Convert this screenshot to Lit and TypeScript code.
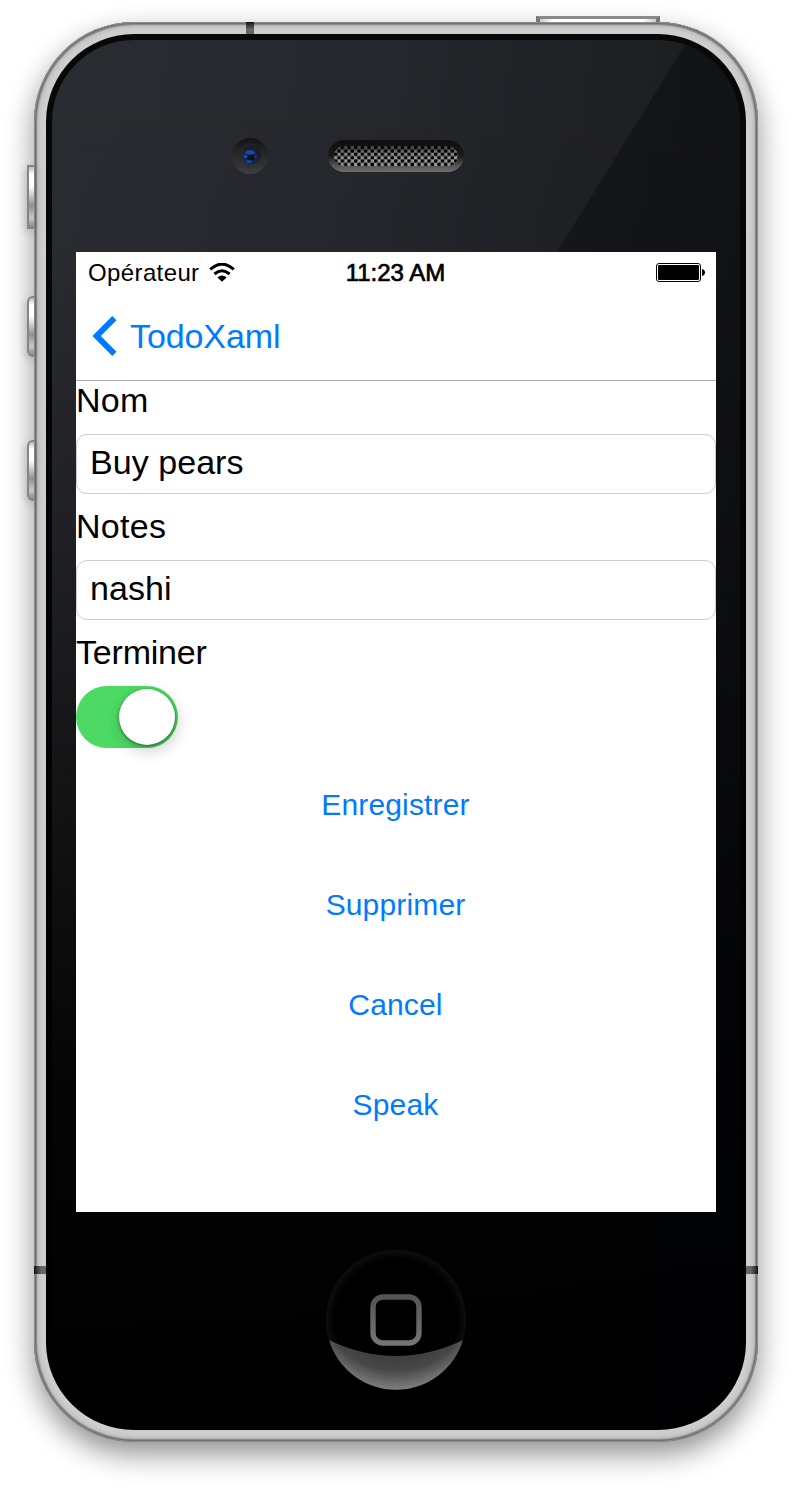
import { LitElement, html, css } from "lit";
import { customElement, property } from "lit/decorators.js";

@customElement("todo-screen")
class TodoScreen extends LitElement {
  @property() name = "Buy pears";
  @property() notes = "nashi";

  static styles = css`
    :host { display: block; width: 640px; height: 960px; background: #fff; color: #000; overflow: hidden;
      font-family: "Liberation Sans", Helvetica, sans-serif; font-size: 34px; line-height: 40px; }
    .status { height: 40px; display: grid; grid-template-columns: 1fr auto 1fr; align-items: center;
      padding: 2px 11px 0 12px; box-sizing: border-box; font-size: 24px; line-height: 38px; }
    .carrier { display: flex; align-items: center; gap: 10px; letter-spacing: 0.38px; }
    .clock { -webkit-text-stroke: 0.7px #000; margin-left: -2px; }
    .battery { justify-self: end; display: block; }
    .wifi { display: block; margin-top: -2px; }
    .nav { height: 88px; display: flex; align-items: center; gap: 13px; padding-left: 16px; box-sizing: border-box;
      color: #007aff; box-shadow: 0 1px #b2b2b2; position: relative; letter-spacing: -0.1px; }
    .form { display: grid; }
    .label { height: 40px; letter-spacing: 0.3px; }
    .label.tight { letter-spacing: -0.2px; }
    .field { box-sizing: border-box; height: 60px; margin: 14px 0 12px; border: 1px solid #ccc; border-radius: 11px;
      padding: 7px 13px; letter-spacing: 0.05px; }
    .switch { width: 102px; height: 62px; margin: 14px 0 12px; border-radius: 31px; background: #4cd964;
      display: flex; justify-content: flex-end; align-items: center; padding-right: 3px; box-sizing: border-box; }
    .knob { width: 56px; height: 56px; border-radius: 50%; background: #fff;
      box-shadow: 0 1px 3px rgba(0,0,0,.5), 2px 6px 16px rgba(0,0,0,.2); }
    .actions { display: grid; gap: 12px; }
    .action { height: 88px; display: flex; align-items: center; justify-content: center; color: #007aff; font-size: 30px;
      border: 0; padding: 2px 1px 0 0; background: none; font-family: inherit; letter-spacing: 0.15px; }
  `;

  render() {
    return html`
      <div class="status">
        <div class="carrier"><span>Opérateur</span>
          <svg class="wifi" width="26" height="19" viewBox="0 0 26 19">
            <path d="M1.2 6.4Q13-4.2 24.8 6.4" fill="none" stroke="#000" stroke-width="3"/>
            <path d="M5.4 11Q13 4.4 20.6 11" fill="none" stroke="#000" stroke-width="3"/>
            <path d="M8.4 14.4Q13 10.4 17.6 14.4L13 18.8Z"/>
          </svg>
        </div>
        <span class="clock">11:23 AM</span>
        <svg class="battery" width="49" height="20" viewBox="0 0 49 20">
          <rect x=".5" y=".5" width="44" height="18" rx="2.5" fill="none" stroke="#000"/>
          <rect x="2" y="2" width="41" height="15" rx="1.2"/>
          <path d="M46 6q3 .8 3 3.5t-3 3.5z"/>
        </svg>
      </div>
      <div class="nav">
        <svg width="25" height="42" viewBox="0 0 25 42"><path d="M20.3 1L24.5 5.2 8.8 21 24.5 36.8 20.3 41 .4 21Z" fill="#007aff"/></svg>
        <span>TodoXaml</span>
      </div>
      <div class="form">
        <div class="label">Nom</div>
        <div class="field">${this.name}</div>
        <div class="label">Notes</div>
        <div class="field">${this.notes}</div>
        <div class="label tight">Terminer</div>
        <div class="switch"><div class="knob"></div></div>
      </div>
      <div class="actions">
        ${["Enregistrer", "Supprimer", "Cancel", "Speak"].map((t) => html`<button class="action">${t}</button>`)}
      </div>`;
  }
}

@customElement("app-root")
class AppRoot extends LitElement {
  static styles = css`
    :host { display: block; width: 792px; height: 1488px; background: #fff; overflow: hidden; }
    .stage { padding: 22px 34px 46px; }
    .phone { position: relative; box-sizing: border-box; width: 724px; height: 1420px; border-radius: 100px; padding: 12px;
      background: #cecece;
      box-shadow: 0 12px 29px rgba(0,0,0,.44), inset 0 0 0 1px #8c8c8c, inset 0 0 0 2px #707070,
        inset 0 0 0 3px #8c8c8c, inset 0 0 0 4px #b4b4b4, inset 0 0 3px 6px #c2c2c2; }
    .key { position: absolute; box-sizing: border-box; border: 2px solid #858585; }
    .side { left: -7px; width: 7px; height: 61px; border-right: 0; box-shadow: -1px 3px 8px rgba(0,0,0,.2);
      background: linear-gradient(#bbb, #fff 12%, #fff 32%, #bbb 52%, #909090 64%, #c8c8c8 85%, #888); }
    .mute { top: 143px; height: 64px; }
    .up { top: 274px; border-radius: 6px 0 0 6px; }
    .down { top: 418px; border-radius: 6px 0 0 6px; }
    .power { left: 502px; top: -6px; width: 124px; height: 6px; border-width: 3px 4px 0;
      border-color: #8a8a8a #777 #777; background: linear-gradient(90deg, #ccc, #fff 12%, #fff 88%, #ccc); }
    .seam { position: absolute; width: 12px; height: 8px; background: linear-gradient(90deg, #111, #666 60%); }
    .seam-left { left: 0; top: 1244px; }
    .seam-right { right: 0; top: 1244px; transform: scaleX(-1); }
    .seam-top { left: 212px; top: 0; width: 8px; height: 12px; background: linear-gradient(#111, #666 60%); }
    .glass { box-sizing: border-box; height: 1396px; border-radius: 88px; padding: 6px; position: relative; overflow: hidden;
      background: linear-gradient(#070909, #000 80%); }
    .face { box-sizing: border-box; height: 1384px; border-radius: 82px; padding: 0 24px; overflow: hidden; position: relative;
      background: linear-gradient(rgba(0,0,0,0) 0%, rgba(0,0,0,.03) 15%, rgba(0,0,0,.22) 34%, rgba(0,0,0,.5) 52%, rgba(0,0,0,.88) 75%, #000),
        linear-gradient(97deg, #2b2c31 0%, #26272c 40%, #191a1d 92%); }
    .gloss { position: absolute; left: 0; top: 0; width: 688px; height: 1384px; background: linear-gradient(97deg, rgba(0,2,6,.34) 70%, rgba(0,2,6,.4));
      clip-path: polygon(636px 0, 100% 0, 100% 100%, 600px 100%, 600px 212px, 505px 212px); }
    .top { position: relative; height: 212px; box-sizing: border-box; padding: 98px 0 0 156px; display: flex; gap: 60px; align-items: flex-start; }
    .speaker { padding-top: 2px; }
    .bottom { position: relative; height: 212px; display: flex; justify-content: center; padding-top: 38px; box-sizing: border-box; }
    todo-screen { position: relative; }
    svg { display: block; }
  `;

  render() {
    return html`
      <div class="stage"><div class="phone">
        <div class="key side mute"></div><div class="key side up"></div><div class="key side down"></div>
        <div class="key power"></div>
        <div class="seam seam-left"></div><div class="seam seam-right"></div><div class="seam seam-top"></div>
        <div class="glass"><div class="face">
          <div class="gloss"></div>
          <div class="top">${this.camera()}<div class="speaker">${this.speaker()}</div></div>
          <todo-screen></todo-screen>
          <div class="bottom">${this.home()}</div>
        </div></div>
      </div></div>`;
  }

  private camera() {
    return html`<svg width="36" height="36" viewBox="0 0 36 36">
      <defs>
        <linearGradient id="ring" x2="0" y2="1"><stop stop-color="#131313"/><stop offset="1" stop-color="#3d3e40"/></linearGradient>
        <linearGradient id="cup" x2="0" y2="1"><stop stop-color="#202024"/><stop offset="1" stop-color="#333336"/></linearGradient>
        <radialGradient id="lens"><stop stop-color="#08161c"/><stop offset=".5" stop-color="#0b2338"/><stop offset=".8" stop-color="#122c66"/><stop offset="1" stop-color="#16204a"/></radialGradient>
      </defs>
      <circle cx="18" cy="18" r="18" fill="url(#ring)"/>
      <circle cx="18" cy="18" r="12.5" fill="url(#cup)"/>
      <circle cx="20" cy="16.5" r="9" fill="#1c1c29"/>
      <circle cx="18" cy="19" r="7.2" fill="url(#lens)"/>
      <ellipse cx="18" cy="14.4" rx="4.6" ry="2.1" fill="#1d48a4"/>
      <rect x="16.5" y="17.6" width="6" height="5" rx="1.5" fill="#06131a"/>
      <ellipse cx="13.4" cy="18.6" rx="2" ry="1.3" fill="#1f4fd0"/>
      <ellipse cx="17" cy="23.6" rx="3" ry="1.4" fill="#1c49b8"/>
      <circle cx="23.6" cy="19" r="1.1" fill="#1a3e94"/>
    </svg>`;
  }

  private speaker() {
    return html`<svg width="136" height="32" viewBox="0 0 136 32">
      <defs>
        <linearGradient id="slot" x2="0" y2="1"><stop stop-color="#0e0e0f"/><stop offset=".5" stop-color="#19191a"/><stop offset=".8" stop-color="#555"/><stop offset="1" stop-color="#6e6e6e"/></linearGradient>
        <linearGradient id="shade" x2="0" y2="1"><stop stop-color="#000" stop-opacity=".6"/><stop offset=".5" stop-color="#000" stop-opacity="0"/></linearGradient>
        <pattern id="mesh" x="6" y="6" width="6.67" height="6.67" patternUnits="userSpaceOnUse">
          <rect width="6.67" height="6.67" fill="#9a9a9a"/>
          <circle cx="1.67" cy="1.67" r="1.95"/><circle cx="5" cy="5" r="1.95"/>
        </pattern>
      </defs>
      <rect width="136" height="32" rx="16" fill="url(#slot)"/>
      <rect x="6" y="6" width="124" height="20" rx="10" fill="url(#mesh)"/>
      <rect x="6" y="6" width="124" height="20" rx="10" fill="url(#shade)"/>
    </svg>`;
  }

  private home() {
    return html`<svg width="140" height="140" viewBox="0 0 140 140">
      <defs>
        <radialGradient id="dish"><stop offset=".87" stop-color="#000"/><stop offset="1" stop-color="#0e0e0e"/></radialGradient>
        <radialGradient id="shine" gradientUnits="userSpaceOnUse" cx="70" cy="40" r="100"><stop offset=".5" stop-color="#363636"/><stop offset=".8" stop-color="#464646"/><stop offset="1" stop-color="#808080"/></radialGradient>
        <linearGradient id="icon" x2="0" y2="1"><stop stop-color="#555"/><stop offset="1" stop-color="#747474"/></linearGradient>
      </defs>
      <circle cx="70" cy="70" r="70" fill="url(#dish)"/>
      <path d="M3 90Q70 122 137 90A70 70 0 0 1 3 90Z" fill="url(#shine)"/>
      <rect x="47" y="47" width="46" height="46" rx="10" fill="none" stroke="url(#icon)" stroke-width="5.4"/>
    </svg>`;
  }
}
